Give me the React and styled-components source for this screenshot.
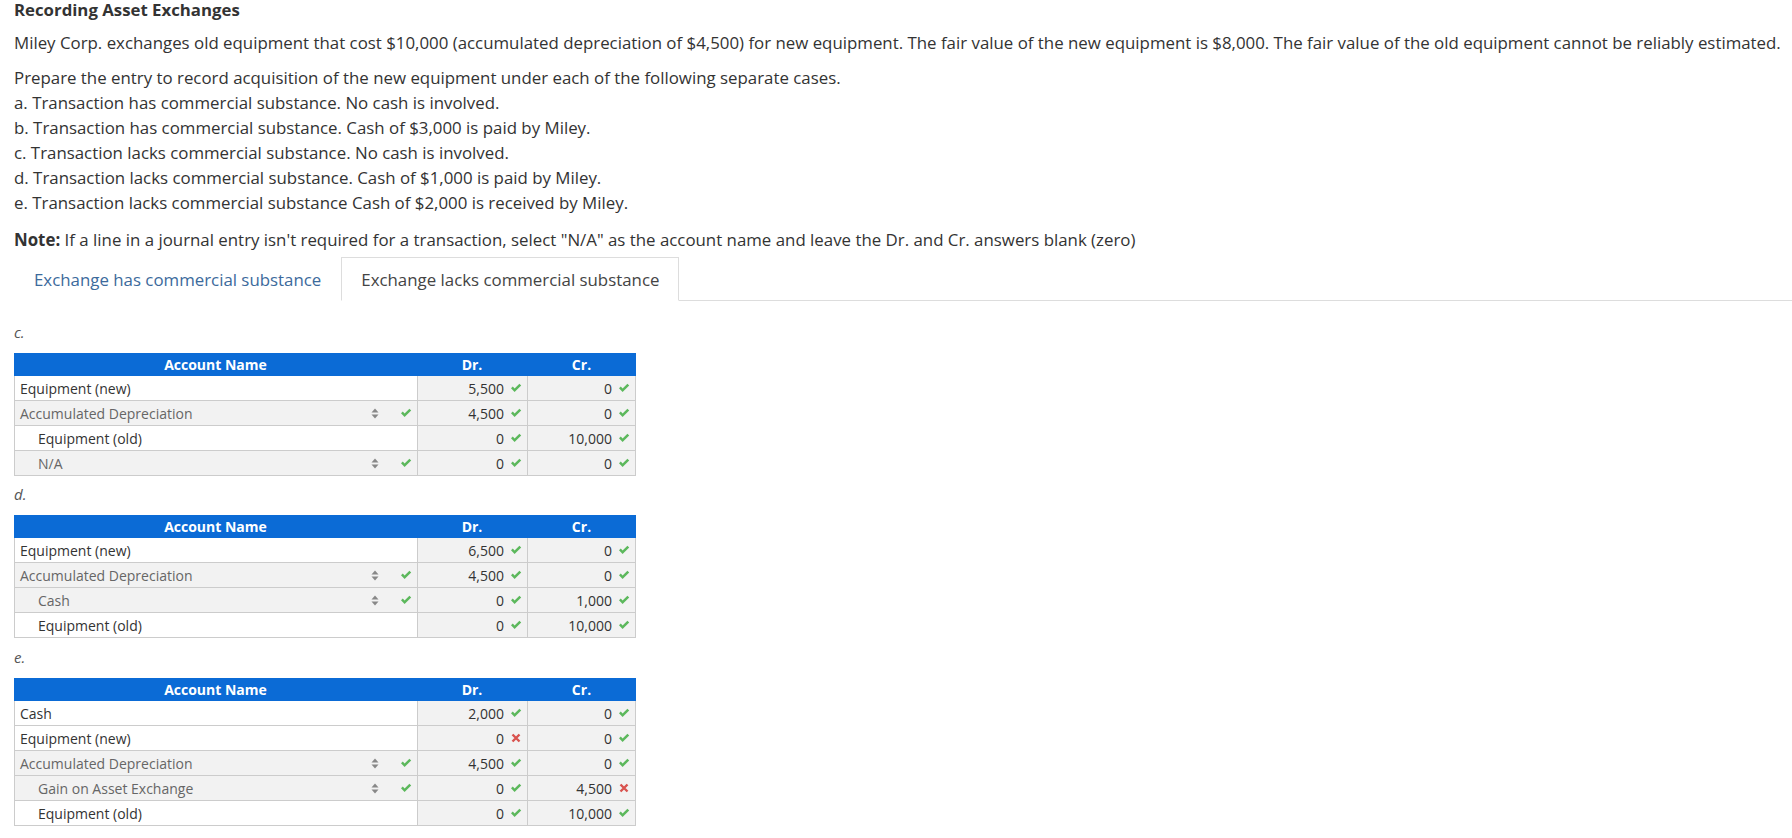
import React from "react";
import styled, { createGlobalStyle } from "styled-components";

const Global = createGlobalStyle`
  html, body { margin: 0; padding: 0; background: #fff; }
  body { font-family: "Open Sans", "Noto Sans", Arial, sans-serif; color: #333; }
`;

const Page = styled.div`
  padding: 0 0 0 14px;
`;

const Title = styled.h1`
  margin: 0;
  font-size: 16.8px;
  line-height: 20px;
  font-weight: 700;
  color: #333;
`;

const Para = styled.p`
  margin: ${(p) => p.$mt || 0}px 0 0 0;
  font-size: 16.85px;
  line-height: 25px;
  color: #333;
`;

const ListItem = styled.div`
  font-size: 16.85px;
  line-height: 25px;
  color: #333;
`;

const Tabs = styled.div`
  display: flex;
  margin-top: 5px;
  border-bottom: 1px solid #ddd;
`;

const Tab = styled.div`
  box-sizing: border-box;
  height: 44px;
  padding: 0 19px 0 19px;
  display: flex;
  align-items: center;
  font-size: 16.85px;
  margin-bottom: -1px;
  color: ${(p) => (p.$active ? "#444" : "#3c6a9c")};
  background: #fff;
  border: 1px solid ${(p) => (p.$active ? "#ddd" : "transparent")};
  border-bottom-color: ${(p) => (p.$active ? "#fff" : "transparent")};
`;

const SectionLabel = styled.div`
  margin-top: ${(p) => p.$mt}px;
  margin-bottom: 11px;
  height: 20px;
  line-height: 20px;
  font-size: 15px;
  font-style: italic;
  color: #555;
`;

const Table = styled.div`
  width: 622px;
  display: grid;
  grid-template-columns: 403px 110px 109px;
  font-size: 14px;
  box-sizing: border-box;
`;

const HeadCell = styled.div`
  height: 23px;
  background: #0b6bd6;
  color: #fff;
  font-weight: 700;
  font-size: 14px;
  display: flex;
  align-items: center;
  justify-content: center;
`;

const Cell = styled.div`
  box-sizing: border-box;
  height: 25px;
  border-bottom: 1px solid #ccc;
  border-left: 1px solid #ccc;
  border-right: ${(p) => (p.$last ? "1px solid #ccc" : "none")};
  background: ${(p) => (p.$shade ? "#f2f2f2" : "#fff")};
  display: flex;
  align-items: center;
`;

const AccountText = styled.span`
  flex: 1;
  padding-left: ${(p) => (p.$indent ? 23 : 5)}px;
  color: ${(p) => (p.$select ? "#666" : "#333")};
  white-space: nowrap;
`;

const SelectIcons = styled.span`
  display: flex;
  align-items: center;
  gap: 21px;
  padding-right: 5px;
`;

const NumText = styled.span`
  flex: 1;
  text-align: right;
  padding-right: 6px;
  color: #333;
`;

const IconBox = styled.span`
  display: inline-flex;
  width: 12px;
  justify-content: center;
  margin-right: ${(p) => p.$mr || 0}px;
`;

const Check = () => (
  <svg width="12" height="10" viewBox="0 0 12 10">
    <path d="M1 5.2 L2.8 3.6 L4.6 5.4 L9.4 0.8 L11.2 2.5 L4.6 8.9 Z" fill="#5cb85c" />
  </svg>
);

const Cross = () => (
  <svg width="10" height="10" viewBox="0 0 10 10">
    <path d="M1.5 1.5 L8.5 8.5 M8.5 1.5 L1.5 8.5" stroke="#d9534f" strokeWidth="2.4" strokeLinecap="butt" />
  </svg>
);

const UpDown = () => (
  <svg width="8" height="11" viewBox="0 0 8 11">
    <path d="M4 0.5 L7.5 4.5 L0.5 4.5 Z" fill="#888" />
    <path d="M4 10.5 L7.5 6.5 L0.5 6.5 Z" fill="#888" />
  </svg>
);

const Mark = ({ ok }) => (ok ? <Check /> : <Cross />);

const JournalTable = ({ rows }) => (
  <Table>
    <HeadCell>Account Name</HeadCell>
    <HeadCell>Dr.</HeadCell>
    <HeadCell>Cr.</HeadCell>
    {rows.map((r, i) => (
      <React.Fragment key={i}>
        <Cell $shade={r.select}>
          <AccountText $indent={r.indent} $select={r.select}>
            {r.name}
          </AccountText>
          {r.select && (
            <SelectIcons>
              <UpDown />
              <Check />
            </SelectIcons>
          )}
        </Cell>
        <Cell $shade>
          <NumText>{r.dr}</NumText>
          <IconBox $mr={5}>
            <Mark ok={r.drOk !== false} />
          </IconBox>
        </Cell>
        <Cell $shade $last>
          <NumText>{r.cr}</NumText>
          <IconBox $mr={5}>
            <Mark ok={r.crOk !== false} />
          </IconBox>
        </Cell>
      </React.Fragment>
    ))}
  </Table>
);

const tableC = [
  { name: "Equipment (new)", dr: "5,500", cr: "0" },
  { name: "Accumulated Depreciation", select: true, dr: "4,500", cr: "0" },
  { name: "Equipment (old)", indent: true, dr: "0", cr: "10,000" },
  { name: "N/A", indent: true, select: true, dr: "0", cr: "0" },
];

const tableD = [
  { name: "Equipment (new)", dr: "6,500", cr: "0" },
  { name: "Accumulated Depreciation", select: true, dr: "4,500", cr: "0" },
  { name: "Cash", indent: true, select: true, dr: "0", cr: "1,000" },
  { name: "Equipment (old)", indent: true, dr: "0", cr: "10,000" },
];

const tableE = [
  { name: "Cash", dr: "2,000", cr: "0" },
  { name: "Equipment (new)", dr: "0", drOk: false, cr: "0" },
  { name: "Accumulated Depreciation", select: true, dr: "4,500", cr: "0" },
  { name: "Gain on Asset Exchange", indent: true, select: true, dr: "0", cr: "4,500", crOk: false },
  { name: "Equipment (old)", indent: true, dr: "0", cr: "10,000" },
];

export default function App() {
  return (
    <Page>
      <Global />
      <Title>Recording Asset Exchanges</Title>
      <Para $mt={10}>
        Miley Corp. exchanges old equipment that cost $10,000 (accumulated depreciation of $4,500) for new
        equipment. The fair value of the new equipment is $8,000. The fair value of the old equipment cannot be
        reliably estimated.
      </Para>
      <Para $mt={10}>Prepare the entry to record acquisition of the new equipment under each of the following separate cases.</Para>
      <ListItem>a. Transaction has commercial substance. No cash is involved.</ListItem>
      <ListItem>b. Transaction has commercial substance. Cash of $3,000 is paid by Miley.</ListItem>
      <ListItem>c. Transaction lacks commercial substance. No cash is involved.</ListItem>
      <ListItem>d. Transaction lacks commercial substance. Cash of $1,000 is paid by Miley.</ListItem>
      <ListItem>e. Transaction lacks commercial substance Cash of $2,000 is received by Miley.</ListItem>
      <Para $mt={12}>
        <strong>Note:</strong> If a line in a journal entry isn't required for a transaction, select "N/A" as the
        account name and leave the Dr. and Cr. answers blank (zero)
      </Para>
      <Tabs>
        <Tab>Exchange has commercial substance</Tab>
        <Tab $active>Exchange lacks commercial substance</Tab>
      </Tabs>
      <SectionLabel $mt={21}>c.</SectionLabel>
      <JournalTable rows={tableC} />
      <SectionLabel $mt={8}>d.</SectionLabel>
      <JournalTable rows={tableD} />
      <SectionLabel $mt={9}>e.</SectionLabel>
      <JournalTable rows={tableE} />
    </Page>
  );
}
